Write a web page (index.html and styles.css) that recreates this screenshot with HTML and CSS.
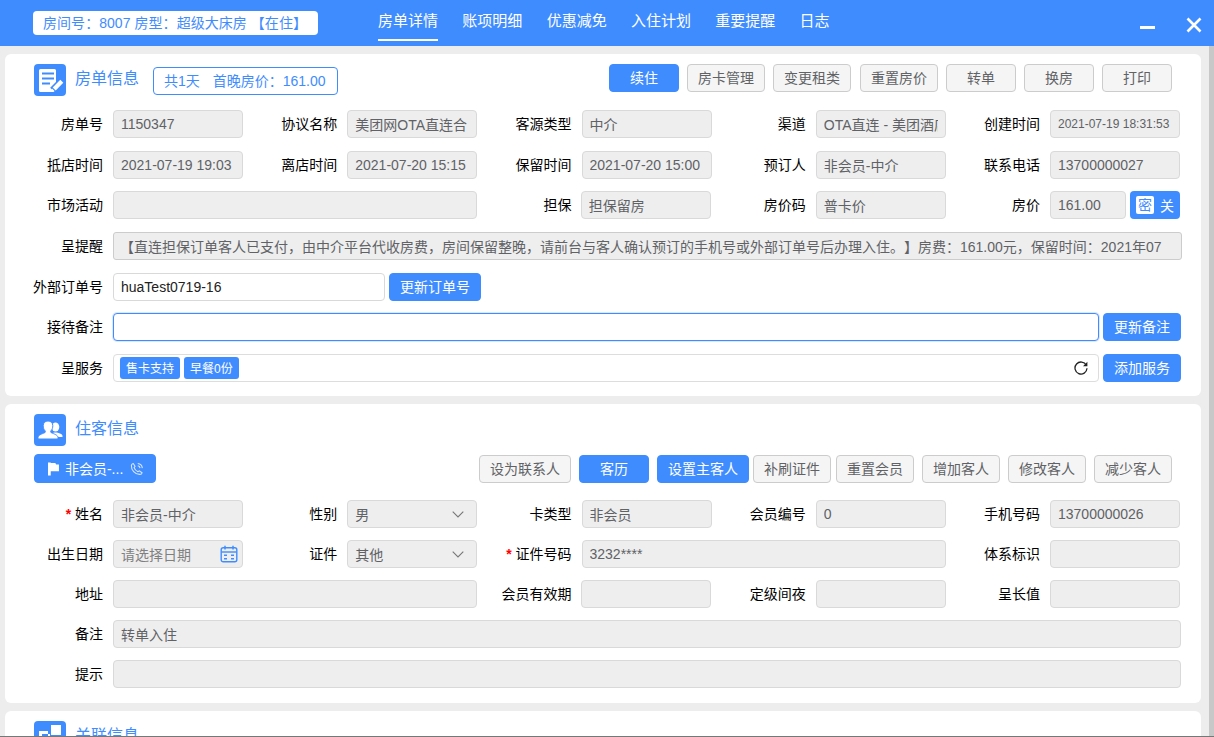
FILE: index.html
```html
<!DOCTYPE html>
<html lang="zh-CN">
<head>
<meta charset="utf-8">
<title>房单详情</title>
<link rel="stylesheet" href="styles.css">
</head>
<body>
<div class="app">
  <header class="topbar">
    <div class="room-pill">房间号：8007 房型：超级大床房 【在住】</div>
    <nav class="tabs">
      <a class="tab active">房单详情</a>
      <a class="tab">账项明细</a>
      <a class="tab">优惠减免</a>
      <a class="tab">入住计划</a>
      <a class="tab">重要提醒</a>
      <a class="tab">日志</a>
    </nav>
    <div class="win-btns">
      <svg class="win-min" width="15" height="3" viewBox="0 0 15 3"><rect width="15" height="3" fill="#fff"/></svg>
      <svg class="win-close" width="16" height="16" viewBox="0 0 16 16"><path d="M1.500 1.500l13 13M14.500 1.500l-13 13" stroke="#fff" stroke-width="2.600" fill="none"/></svg>
    </div>
  </header>
  <div class="body-row">
    <main class="main">
      <section class="card card-order">
        <div class="card-head">
          <span class="card-icon">
            <svg width="32" height="32" viewBox="0 0 32 32"><path d="M6.500 5h14A1.500 1.500 0 0 1 22 6.500V26.500a1.500 1.500 0 0 1-1.500 1.500h-14A1.500 1.500 0 0 1 5 26.500V6.500A1.500 1.500 0 0 1 6.500 5z" fill="#fff"/><path d="M8 9.500h12M8 14.500h12M8 19.500h8" stroke="#3f8cff" stroke-width="2" fill="none"/><path d="M28 17.500l-9 9" stroke="#3f8cff" stroke-width="8" fill="none"/><path d="M27.800 17.200l-7.600 7.800" stroke="#fff" stroke-width="4.200" fill="none"/><path d="M18 24.500l-1 3.500 3.600-1z" fill="#fff"/></svg>
          </span>
          <h2 class="card-title">房单信息</h2>
          <span class="stay-badge">共1天 &nbsp; 首晚房价：161.00</span>
          <div class="toolbar">
            <button class="btn primary">续住</button>
            <button class="btn w78">房卡管理</button>
            <button class="btn w78">变更租类</button>
            <button class="btn w78 gap-plus">重置房价</button>
            <button class="btn">转单</button>
            <button class="btn">换房</button>
            <button class="btn">打印</button>
          </div>
        </div>
        <div class="form form-order">
          <div class="field"><label>房单号</label><input class="inp" disabled value="1150347"></div>
          <div class="field"><label>协议名称</label><input class="inp raised" disabled value="美团网OTA直连合"></div>
          <div class="field"><label>客源类型</label><input class="inp" disabled value="中介"></div>
          <div class="field"><label>渠道</label><input class="inp" disabled value="OTA直连 - 美团酒店"></div>
          <div class="field"><label>创建时间</label><input class="inp small" disabled value="2021-07-19 18:31:53"></div>

          <div class="field"><label>抵店时间</label><input class="inp" disabled value="2021-07-19 19:03"></div>
          <div class="field"><label>离店时间</label><input class="inp" disabled value="2021-07-20 15:15"></div>
          <div class="field"><label>保留时间</label><input class="inp" disabled value="2021-07-20 15:00"></div>
          <div class="field"><label>预订人</label><input class="inp" disabled value="非会员-中介"></div>
          <div class="field"><label>联系电话</label><input class="inp" disabled value="13700000027"></div>

          <div class="field span2"><label>市场活动</label><input class="inp" disabled></div>
          <div class="field shift-l"><label>担保</label><input class="inp" disabled value="担保留房"></div>
          <div class="field"><label>房价码</label><input class="inp" disabled value="普卡价"></div>
          <div class="field"><label>房价</label>
            <div class="combo"><input class="inp" disabled value="161.00"><span class="secret-switch"><span class="secret-knob">密</span><span>关</span></span></div>
          </div>

          <div class="field span5 over2"><label>呈提醒</label><input class="inp notice" disabled value="【直连担保订单客人已支付，由中介平台代收房费，房间保留整晚，请前台与客人确认预订的手机号或外部订单号后办理入住。】房费：161.00元，保留时间：2021年07"></div>

          <div class="field span5 gap-top"><label>外部订单号</label>
            <div class="combo"><input class="inp live w272" value="huaTest0719-16"><button class="btn primary w92">更新订单号</button></div>
          </div>
          <div class="field span5 over1"><label>接待备注</label>
            <div class="combo"><input class="inp live focus"><button class="btn primary w78">更新备注</button></div>
          </div>
          <div class="field span5 over1 gap-top"><label>呈服务</label>
            <div class="combo">
              <div class="tagbox">
                <span class="tag">售卡支持</span><span class="tag">早餐0份</span>
                <svg class="refresh" width="14" height="14" viewBox="0 0 14 14"><path d="M12.300 4.200A6 6 0 1 0 13 7.300" fill="none" stroke="#222" stroke-width="1.300"/><path d="M13.400 .8v4.400H9z" fill="#222"/></svg>
              </div>
              <button class="btn primary w78">添加服务</button>
            </div>
          </div>
        </div>
      </section>

      <section class="card card-guest">
        <div class="card-head">
          <span class="card-icon">
            <svg width="32" height="32" viewBox="0 0 32 32"><ellipse cx="21.500" cy="13" rx="3.800" ry="4.500" fill="#fff"/><path d="M17 23v-3l3-1.500h3l3 1c1.500.6 2.500 1.300 2.500 2.500v1z" fill="#fff"/><path d="M4 25v-1.500c0-2.500 4-3.500 7-5 .6-.4.4-1.200 0-1.800-1.200-1.300-1.800-3-1.800-5C9.200 8.800 11.200 7 14 7s4.800 1.800 4.800 4.700c0 2-.6 3.700-1.800 5-.4.600-.6 1.400 0 1.800 3 1.500 7 2.500 7 5V25z" fill="#fff" stroke="#3f8cff" stroke-width="1"/></svg>
          </span>
          <h2 class="card-title">住客信息</h2>
        </div>
        <div class="guest-bar">
          <button class="btn primary guest-chip">
            <svg width="12" height="14" viewBox="0 0 12 14"><path d="M0 0h3v14H0zM3 .5h5L9 2h3v7.500H3z" fill="#fff"/></svg>
            <span>非会员-...</span>
            <svg width="15" height="14" viewBox="0 0 15 14"><path d="M3.500 1l2 3-1 1.500c.5 1.700 2.200 3.500 4.200 4.500l1.500-1 3 2.200c-.4 1.400-1.500 1.800-2.700 1.700C5.500 12.600 1.200 8 1.500 3.300c.1-1.200 1-2 2-2.300zM8.500 1c2.800.3 4.700 2.200 5 5M8.500 3.500c1.400.2 2.300 1.100 2.500 2.500" fill="none" stroke="#d6e5ff" stroke-width="1.200"/></svg>
          </button>
          <div class="toolbar tight">
            <button class="btn w92">设为联系人</button>
            <button class="btn primary">客历</button>
            <button class="btn primary w92">设置主客人</button>
            <button class="btn w78 nudge-a">补刷证件</button>
            <button class="btn w78 nudge-b">重置会员</button>
            <button class="btn w78">增加客人</button>
            <button class="btn w78">修改客人</button>
            <button class="btn w78">减少客人</button>
          </div>
        </div>
        <div class="form form-guest">
          <div class="field"><label><i class="req">*</i> 姓名</label><input class="inp" disabled value="非会员-中介"></div>
          <div class="field"><label>性别</label><div class="selectbox">男<svg width="12" height="7" viewBox="0 0 12 7"><path d="M.7.7L6 6l5.300-5.300" fill="none" stroke="#777" stroke-width="1.100"/></svg></div></div>
          <div class="field"><label>卡类型</label><input class="inp" disabled value="非会员"></div>
          <div class="field"><label>会员编号</label><input class="inp" disabled value="0"></div>
          <div class="field"><label>手机号码</label><input class="inp" disabled value="13700000026"></div>

          <div class="field"><label>出生日期</label><div class="selectbox hint">请选择日期<svg width="18" height="18" viewBox="0 0 18 18"><rect x="1.200" y="2.800" width="15.600" height="14" rx="2" fill="none" stroke="#3f8cff" stroke-width="1.400"/><path d="M1.500 7h15" stroke="#3f8cff" stroke-width="1.400"/><path d="M5 .8v3.600M13 .8v3.600" stroke="#3f8cff" stroke-width="1.500"/><path d="M4 9.500h3v1.600H4zM11 9.500h3v1.600h-3zM4 13h3v1.600H4zM11 13h3v1.600h-3z" fill="#3f8cff"/></svg></div></div>
          <div class="field"><label>证件</label><div class="selectbox">其他<svg width="12" height="7" viewBox="0 0 12 7"><path d="M.7.7L6 6l5.300-5.300" fill="none" stroke="#777" stroke-width="1.100"/></svg></div></div>
          <div class="field span2"><label><i class="req">*</i> 证件号码</label><input class="inp" disabled value="3232****"></div>
          <div class="field"><label>体系标识</label><input class="inp" disabled></div>

          <div class="field span2"><label>地址</label><input class="inp" disabled></div>
          <div class="field shift-l"><label>会员有效期</label><input class="inp" disabled></div>
          <div class="field"><label>定级间夜</label><input class="inp" disabled></div>
          <div class="field"><label>呈长值</label><input class="inp" disabled></div>

          <div class="field span5 over1"><label>备注</label><input class="inp" disabled value="转单入住"></div>
          <div class="field span5 over1"><label>提示</label><input class="inp" disabled></div>
        </div>
      </section>

      <section class="card card-link">
        <div class="card-head">
          <span class="card-icon">
            <svg width="32" height="32" viewBox="0 0 32 32"><path d="M5 10h9v3H8v6h6v-6h2v9H5z" fill="#fff"/><rect x="17" y="4" width="10" height="10" fill="#fff"/></svg>
          </span>
          <h2 class="card-title">关联信息</h2>
        </div>
      </section>
    </main>
    <div class="scrollbar"></div>
  </div>
</div>
</body>
</html>
```

FILE: styles.css
```css
* { box-sizing: border-box; text-spacing-trim: space-all; }
html, body { margin: 0; padding: 0; height: 100%; overflow: hidden; }
body {
  font-family: "Liberation Sans", "Noto Sans CJK SC", sans-serif;
  font-size: 14px;
  color: #000;
  background: #ededed;
}
.app { height: 737px; display: flex; flex-direction: column; border-bottom: 1px solid #777; }

.topbar { height: 46px; flex: none; background: #3f8cff; display: flex; position: relative; }
.room-pill {
  margin: 11px 0 0 33px; width: 285px; height: 24px; line-height: 24px;
  padding-left: 10px; background: #fff; border-radius: 4px; color: #3f8cff; white-space: nowrap;
  letter-spacing: .05px;
}
.tabs { display: flex; gap: 24.300px; margin-left: 60px; }
.tab { display: block; height: 41px; padding-top: 11px; line-height: 20px; font-size: 15px; color: #fff; }
.tab.active { border-bottom: 2px solid #fff; }
.win-btns { margin-left: auto; padding-right: 12px; display: flex; }
.win-min { margin-top: 26px; margin-right: 31px; }
.win-close { margin-top: 17px; }

.body-row { flex: 1; min-height: 0; display: flex; }
.main { flex: 1; min-width: 0; overflow: hidden; padding: 8px 8px 0 5px; display: flex; flex-direction: column; gap: 8px; }
.scrollbar { width: 5px; flex: none; background: #c8c8c8; }

.card { flex: none; background: #fff; border-radius: 6px; padding-top: 10px; }
.card-order { height: 342px; }
.card-guest { height: 299px; }
.card-link { height: 120px; }

.card-head { display: flex; align-items: flex-start; padding: 0 29px; height: 32px; }
.card-icon { width: 32px; height: 32px; flex: none; background: #3f8cff; border-radius: 4px; display: block; }
.card-icon svg { display: block; }
.card-title { margin: 5px 0 0 9px; font-size: 16px; font-weight: 400; line-height: 20px; color: #3f8cff; white-space: nowrap; }
.stay-badge {
  margin: 3px 0 0 14px; width: 185px; height: 28px; line-height: 26px; padding-left: 10px; word-spacing: .4px;
  border: 1px solid #3f8cff; border-radius: 4px; color: #3f8cff; white-space: nowrap;
}
.toolbar { margin-left: auto; display: flex; gap: 8px; }
.toolbar.tight { margin-top: 1px; }

.btn {
  width: 70px; height: 28px; padding: 0; border: 1px solid #ccc; border-radius: 4px;
  background: #f5f5f5; color: #606266; font: inherit; white-space: nowrap; flex: none; line-height: 26px;
}
.btn.primary { background: #3f8cff; border-color: #3f8cff; color: #fff; }
.btn.w78 { width: 78px; }
.btn.w92 { width: 92px; }
.btn.gap-plus { margin-left: 1px; }
.btn.nudge-a { margin-left: -4px; }
.btn.nudge-b { margin-left: -3px; }

.form { display: grid; grid-template-columns: repeat(5, 234.250px); padding-left: 3px; grid-auto-rows: 28px; align-items: start; }
.form-order { margin-top: 14px; row-gap: 12.500px; }
.form-guest { margin-top: 17px; row-gap: 12px; }

.field { display: grid; grid-template-columns: 95px 1fr; column-gap: 10px; align-items: center; height: 28px; min-width: 0; margin-right: -.75px; }
.field label { text-align: right; white-space: nowrap; line-height: 28px; }
.span2 { grid-column: span 2; }
.span5 { grid-column: span 5; }
.over1 { margin-right: -1.750px; }
.over2 { margin-right: -2.750px; }
.field.shift-l { column-gap: 9.250px; margin-right: 0; }
.gap-top { margin-top: 1px; }

.inp {
  display: block; width: 100%; height: 28px; min-width: 0; padding: 0 7px; margin: 0;
  border: 1px solid #d9d9d9; border-radius: 4px; background: #eee; color: #606266;
  -webkit-text-fill-color: #606266; font: inherit; outline: none; opacity: 1;
}
.inp.raised { margin-top: -1px; }
.inp.small { font-size: 12px; }
.inp.notice { padding-left: 6px; border-color: #ccc; border-radius: 3px; }
.inp.live { background: #fff; color: #222; -webkit-text-fill-color: #222; }
.inp.focus { border-color: #3f8cff; box-shadow: 0 0 0 1px #dbe8ff; }
.inp.w272 { width: 272px; flex: none; }

.combo { display: flex; gap: 4px; height: 28px; min-width: 0; }
.combo .inp { flex: 1; }
.combo .inp.w272 { flex: none; }

.secret-switch {
  width: 50px; height: 28px; flex: none; background: #3f8cff; border-radius: 4px;
  display: flex; align-items: center; padding: 0 6px; gap: 6px; color: #fff;
}
.secret-knob { width: 18px; height: 18px; flex: none; background: #fff; border-radius: 2px; color: #3f8cff; font-size: 14px; line-height: 18px; text-align: center; }

.tagbox { flex: 1; min-width: 0; height: 28px; display: flex; align-items: center; gap: 4px; padding: 0 10px 0 6px; border: 1px solid #ddd; border-radius: 4px; background: #fff; }
.tag { height: 22px; line-height: 22px; padding: 1px 6px 0; background: #3f8cff; color: #fff; border-radius: 3px; font-size: 12px; white-space: nowrap; }
.refresh { margin-left: auto; }

.guest-bar { display: flex; align-items: flex-start; padding: 0 29px; margin-top: 8px; height: 29px; }
.guest-chip { width: 122px; height: 29px; display: flex; align-items: center; padding: 0 11px 0 13px; gap: 6px; justify-content: flex-start; }
.guest-chip span { margin-right: 1px; }

.req { color: #f00; font-style: normal; font-weight: 700; }
.selectbox {
  height: 28px; display: flex; align-items: center; justify-content: space-between;
  padding: 0 12px 0 7px; border: 1px solid #d9d9d9; border-radius: 4px; background: #eee; color: #606266; white-space: nowrap;
}
.selectbox.hint { padding-right: 4px; color: #808080; }
```
